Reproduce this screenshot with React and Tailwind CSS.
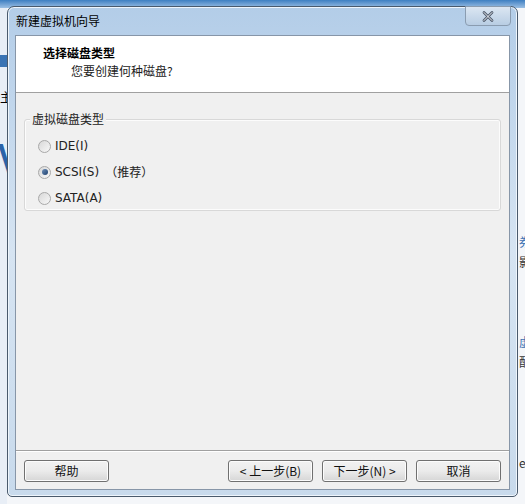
import React from 'react';

const font = { fontFamily: '"Noto Sans CJK SC", "DejaVu Sans", sans-serif' };

function Radio({ checked, label, extra }) {
  return (
    <div className="flex items-center h-[26px]">
      <span className="w-[13px] h-[13px] rounded-full border border-[#a8a8a8] bg-gradient-to-br from-[#d8d8d8] to-[#f8f8f8] flex items-center justify-center">
        {checked && <span className="w-[6px] h-[6px] rounded-full bg-gradient-to-br from-[#6f90b8] to-[#1c3f6e]" />}
      </span>
      <span className="ml-[4px] text-[12px] text-[#222]" style={{ fontFamily: '"DejaVu Sans", "Noto Sans CJK SC", sans-serif' }}>
        {label}
      </span>
      {extra && <span className="ml-[6px] text-[12px] text-[#222]">{extra}</span>}
    </div>
  );
}

function Btn({ children, className = '' }) {
  return (
    <button
      className={`h-[22px] w-[85px] rounded-[3px] border border-[#707070] bg-gradient-to-b from-[#f2f2f2] via-[#ebebeb] to-[#d6d6d6] text-[12px] text-[#111] leading-none flex items-center justify-center shadow-[inset_0_0_0_1px_#fcfcfc] ${className}`}
    >
      {children}
    </button>
  );
}

export default function App() {
  return (
    <div className="relative w-[525px] h-[504px] overflow-hidden bg-[#f4f6f9]" style={font}>
      {/* parent window behind */}
      <div className="absolute left-0 top-0 w-full h-[8px] bg-gradient-to-b from-[#3d7fc1] to-[#9cc0e4]" />
      <div className="absolute left-0 top-[8px] w-[7px] h-[496px] bg-[#e8eef6]" />
      <div className="absolute left-0 top-[55px] w-[7px] h-[12px] bg-[#3a74b4]" />
      <div className="absolute left-0 top-[88px] w-[7px] h-[18px] text-[12px] leading-[18px] text-black overflow-hidden">主</div>
      <div className="absolute left-[-2px] top-[128px] w-[9px] h-[60px] text-[48px] leading-[60px] text-[#2b63a8] overflow-hidden">V</div>
      <div className="absolute right-0 top-[232px] w-[6px] h-[40px] overflow-hidden text-[12px] leading-[20px] text-[#3b6fb1]">
        <div>券</div>
        <div className="text-[#333]">影</div>
      </div>
      <div className="absolute right-0 top-[332px] w-[6px] h-[40px] overflow-hidden text-[12px] leading-[20px] text-[#3b6fb1]">
        <div>虚</div>
        <div className="text-[#333]">配</div>
      </div>
      <div className="absolute right-0 top-[454px] w-[6px] h-[18px] overflow-hidden text-[12px] leading-[18px] text-[#333]">e</div>

      {/* dialog window */}
      <div className="absolute left-[7px] top-[6px] w-[511px] h-[491px] rounded-t-[7px] rounded-b-[5px] border border-[#4a5a6c] bg-gradient-to-b from-[#b3cde8] via-[#d6e4f2] to-[#c8daec] shadow-[inset_0_0_0_1px_#eef5fc] flex flex-col">
        <div className="h-[28px] flex items-center pl-[8px] text-[12px] text-black">新建虚拟机向导</div>
        <div className="absolute right-[6px] top-[-1px] w-[46px] h-[20px] rounded-b-[4px] border border-[#8a9cb0] bg-gradient-to-b from-[#dbe6f2] to-[#b8cde3] flex items-center justify-center">
          <svg width="12" height="11" viewBox="0 0 12 11">
            <path d="M2 1.5 L10 9.5 M10 1.5 L2 9.5" stroke="#4a5668" strokeWidth="2.6" strokeLinecap="round" />
            <path d="M2 1.5 L10 9.5 M10 1.5 L2 9.5" stroke="#f4f6f9" strokeWidth="1" strokeLinecap="round" />
          </svg>
        </div>

        <div className="flex-1 mx-[7px] mb-[6px] border border-[#8796a8] bg-[#f0f0f0] flex flex-col">
          {/* header */}
          <div className="h-[57px] bg-white border-b border-[#a0a0a0] pt-[8px] flex flex-col">
            <div className="pl-[27px] text-[12px] font-bold text-black leading-[17px]">选择磁盘类型</div>
            <div className="pl-[55px] mt-[1px] text-[12px] text-[#222] leading-[17px]">您要创建何种磁盘?</div>
          </div>

          {/* body */}
          <div className="flex-1 pt-[26px] px-[8px]">
            <div className="relative border border-[#d8d8d8] rounded-[3px] shadow-[inset_0_0_0_1px_#fcfcfc] pt-[13px] pb-[4px] pl-[13px] h-[92px]">
              <span className="absolute left-[5px] top-[-10px] bg-[#f0f0f0] px-[2px] text-[12px] text-[#222] leading-[18px]">虚拟磁盘类型</span>
              <Radio label="IDE(I)" />
              <Radio checked label="SCSI(S)" extra="（推荐）" />
              <Radio label="SATA(A)" />
            </div>
          </div>

          {/* footer */}
          <div className="h-[39px] border-t border-[#a0a0a0] shadow-[inset_0_1px_0_#ffffff] flex items-start pt-[9px] px-[8px]">
            <Btn>帮助</Btn>
            <div className="flex-1" />
            <Btn>&lt; 上一步(B)</Btn>
            <Btn className="ml-[9px]">下一步(N) &gt;</Btn>
            <Btn className="ml-[9px]">取消</Btn>
          </div>
        </div>
      </div>
    </div>
  );
}
